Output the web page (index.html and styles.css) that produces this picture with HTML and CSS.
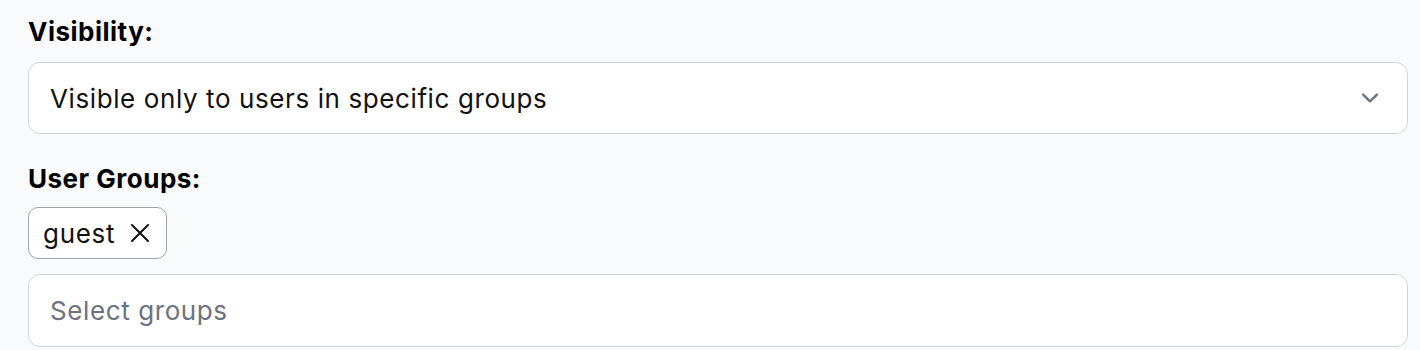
FILE: index.html
```html
<!DOCTYPE html>
<html>
<head>
    <title>Visibility Settings</title>
    <link rel="stylesheet" href="styles.css">
</head>
<body>
    <div class="form">
        <!-- Visibility -->
        <label class="field-label">Visibility:</label>
        <div class="select-box">
            <span class="select-value">Visible only to users in specific groups</span>
            <svg class="chevron" viewBox="0 0 24 24" fill="none" stroke="currentColor" stroke-width="2.6" stroke-linecap="round" stroke-linejoin="round">
                <path d="M19.5 8.25l-7.5 7.5-7.5-7.5"/>
            </svg>
        </div>

        <!-- User groups -->
        <label class="field-label second">User Groups:</label>
        <div class="chips">
            <span class="chip">
                guest
                <svg class="chip-x" viewBox="0 0 20 20" fill="none" stroke="currentColor" stroke-width="2" stroke-linecap="round">
                    <path d="M2 2l16 16M18 2L2 18"/>
                </svg>
            </span>
        </div>
        <div class="input-box">
            <span class="placeholder">Select groups</span>
        </div>
    </div>
</body>
</html>
```

FILE: styles.css
```css
body {
    margin: 0;
    padding: 0;
    background-color: #f9fafb;
    font-family: Inter, "Noto Sans", sans-serif;
    color: #000;
}

.form {
    display: flex;
    flex-direction: column;
    padding: 14px 12px 0 28px;
}

/* Labels */
.field-label {
    font-size: 26px;
    font-weight: 700;
    letter-spacing: 0.5px;
    line-height: 36px;
    margin-bottom: 12px;
}

.field-label.second {
    margin-top: 27px;
    margin-bottom: 10px;
}

/* Select */
.select-box {
    display: flex;
    align-items: center;
    justify-content: space-between;
    height: 72px;
    box-sizing: border-box;
    padding: 0 26px 0 21px;
    background-color: #fff;
    border: 1px solid #d1d5db;
    border-radius: 12px;
}

.select-value {
    font-size: 26px;
    letter-spacing: 0.6px;
    color: #111;
}

.chevron {
    width: 22px;
    height: 22px;
    color: #6b7280;
}

/* Chips */
.chips {
    display: flex;
    gap: 8px;
    margin-bottom: 15px;
}

.chip {
    display: flex;
    align-items: center;
    gap: 15px;
    height: 52px;
    box-sizing: border-box;
    padding: 0 16px 0 14px;
    font-size: 26px;
    letter-spacing: 0.7px;
    color: #111;
    background-color: #fff;
    border: 1px solid #a1a1aa;
    border-radius: 10px;
}

.chip-x {
    width: 20px;
    height: 20px;
    color: #111;
}

/* Input */
.input-box {
    display: flex;
    align-items: center;
    height: 73px;
    box-sizing: border-box;
    padding: 0 21px;
    background-color: #fff;
    border: 1px solid #d1d5db;
    border-radius: 12px;
}

.placeholder {
    font-size: 26px;
    letter-spacing: 0.6px;
    color: #6b7280;
}
```
